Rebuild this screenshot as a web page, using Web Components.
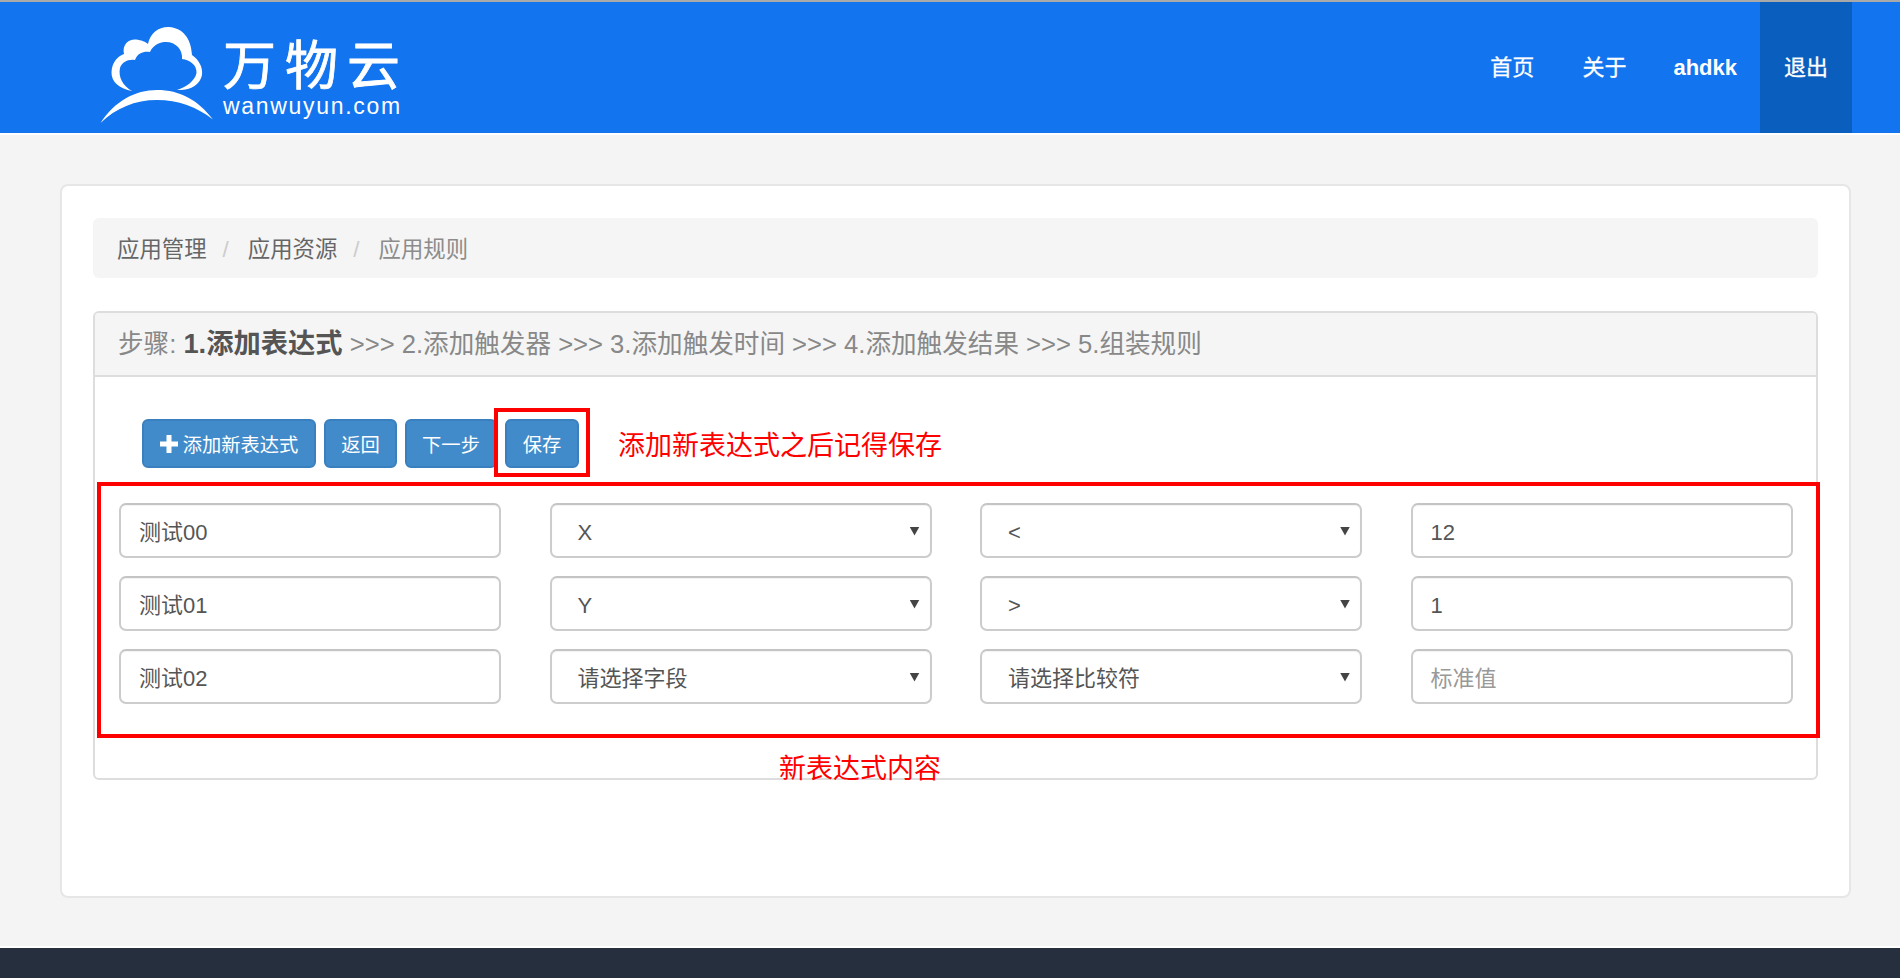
<!DOCTYPE html>
<html lang="zh">
<head>
<meta charset="utf-8">
<title>应用规则</title>
<style>
  html, body { margin: 0; height: 978px; overflow: hidden; }
  body {
    background: #f4f4f4;
    font-family: "Liberation Sans", "Noto Sans CJK SC", sans-serif;
    color: #555;
  }
  step-panel b { font-size: 27.3px; color: #555; }
</style>
</head>
<body>
<app-navbar>
  <nav-item>首页</nav-item>
  <nav-item>关于</nav-item>
  <nav-item bold>ahdkk</nav-item>
  <nav-item active>退出</nav-item>
</app-navbar>

<app-card>
  <bread-crumbs>
    <crumb-item>应用管理</crumb-item>
    <crumb-item>应用资源</crumb-item>
    <crumb-item current>应用规则</crumb-item>
  </bread-crumbs>

  <step-panel>
    <span slot="heading">步骤: <b>1.添加表达式</b> &gt;&gt;&gt; 2.添加触发器 &gt;&gt;&gt; 3.添加触发时间 &gt;&gt;&gt; 4.添加触发结果 &gt;&gt;&gt; 5.组装规则</span>

    <tool-bar>
      <ui-button icon="plus" style="width:174px">添加新表达式</ui-button>
      <ui-button style="width:73px">返回</ui-button>
      <ui-button style="width:92px">下一步</ui-button>
      <red-mark>
        <ui-button style="width:74px">保存</ui-button>
      </red-mark>
      <red-note style="margin-left:31px">添加新表达式之后记得保存</red-note>
    </tool-bar>

    <expr-rows>
      <form-field>测试00</form-field>
      <form-field select>X</form-field>
      <form-field select>&lt;</form-field>
      <form-field>12</form-field>

      <form-field>测试01</form-field>
      <form-field select>Y</form-field>
      <form-field select>&gt;</form-field>
      <form-field>1</form-field>

      <form-field>测试02</form-field>
      <form-field select>请选择字段</form-field>
      <form-field select>请选择比较符</form-field>
      <form-field placeholder>标准值</form-field>
    </expr-rows>

    <red-note style="margin:18px 0 0 684px; line-height:27px; height:27px">新表达式内容</red-note>
  </step-panel>
</app-card>

<app-footer></app-footer>

<script>
class AppNavbar extends HTMLElement {
  constructor() {
    super();
    const template = document.createElement('template');
    template.innerHTML = `
    <style>
      :host {
        display: block;
        border-top: 2px solid #a9a9a9;
        border-bottom: 2px solid #fff;
      }
      .bar {
        height: 131px;
        background: #1274ee;
        display: flex;
        justify-content: space-between;
        padding: 0 48px 0 100px;
      }
      .logo { display: flex; gap: 9px; color: #fff; }
      .cloud { display: block; width: 114px; height: 100px; margin-top: 22px; }
      .name {
        font-family: "Noto Sans CJK SC", sans-serif;
        font-size: 53px;
        line-height: 52px;
        letter-spacing: 9px;
        margin-top: 34px;
        white-space: nowrap;
        -webkit-text-stroke: 0.8px #fff;
      }
      .domain {
        font-family: "Liberation Sans", sans-serif;
        font-size: 23px;
        line-height: 24px;
        letter-spacing: 1.7px;
        margin-top: 6px;
      }
      nav { display: flex; }
    </style>
    <div class="bar">
      <div class="logo">
        <svg class="cloud" viewBox="100 22 114 100" fill="#fff">
          <path d="M132 89 C120 87 111 80 111.5 70 C112 60 118 54 124 52 C122 43 128 37 136 37.5 C141 38 146 40 148 42 C150 31 159 24.5 169 25 C182 26 191 35 192 53 C199 58 203 65 202 73 C200 83 190 89 177 88 C186 85 195 79 196.5 71 C197 63 190 58 182 57 C183 47 175 39 164 40 C157 41 152 45 150 50 C145 49 138 50 135 58 C128 57 122 60 120 66 C118 75 123 84 132 89 Z"/>
          <path d="M100.5 121 C115 99 135 88 157 88 C180 88 198 98 213 117.5 C197 105 178 98 157 98 C135 98 116 106 100.5 121 Z"/>
        </svg>
        <div>
          <div class="name">万物云</div>
          <div class="domain">wanwuyun.com</div>
        </div>
      </div>
      <nav><slot></slot></nav>
    </div>
    `;
    this.attachShadow({ mode: 'open' }).appendChild(template.content.cloneNode(true));
  }
}

class NavItem extends HTMLElement {
  constructor() {
    super();
    this.attachShadow({ mode: 'open' }).innerHTML = `
    <style>
      :host {
        display: flex;
        align-items: center;
        padding: 0 24px;
        color: #fff;
        font-size: 22px;
        line-height: 30px;
        white-space: nowrap;
        -webkit-text-stroke: 0.3px #fff;
      }
      :host([bold]) { font-weight: bold; -webkit-text-stroke: 0; padding: 0 23px; }
      :host([active]) { background: #0a5ebd; }
    </style>
    <slot></slot>
    `;
  }
}

class AppCard extends HTMLElement {
  constructor() {
    super();
    this.attachShadow({ mode: 'open' }).innerHTML = `
    <style>
      :host {
        display: block;
        box-sizing: border-box;
        width: 1791px;
        height: 714px;
        margin: 49px 0 0 60px;
        padding: 32px 31px;
        background: #fff;
        border: 2px solid #e6e6e6;
        border-radius: 8px;
      }
    </style>
    <slot></slot>
    `;
  }
}

class BreadCrumbs extends HTMLElement {
  constructor() {
    super();
    this.attachShadow({ mode: 'open' }).innerHTML = `
    <style>
      :host {
        display: flex;
        align-items: center;
        height: 60px;
        padding: 3px 0 0 24px;
        box-sizing: border-box;
        background: #f5f5f5;
        border-radius: 6px;
        line-height: 30px;
      }
    </style>
    <slot></slot>
    `;
  }
}

class CrumbItem extends HTMLElement {
  constructor() {
    super();
    this.attachShadow({ mode: 'open' }).innerHTML = `
    <style>
      :host {
        display: inline-block;
        font-size: 22.4px;
        color: #666;
        white-space: nowrap;
      }
      :host([current]) { color: #8c8c8c; }
      .sep { color: #ccc; padding: 0 19px 0 16px; }
      :host([current]) .sep { display: none; }
    </style>
    <slot></slot><span class="sep">/</span>
    `;
  }
}

class StepPanel extends HTMLElement {
  constructor() {
    super();
    this.attachShadow({ mode: 'open' }).innerHTML = `
    <style>
      :host {
        display: block;
        box-sizing: border-box;
        height: 469px;
        margin-top: 33px;
        background: #fff;
        border: 2px solid #ddd;
        border-radius: 6px;
      }
      header {
        box-sizing: border-box;
        height: 64px;
        padding: 0 0 1px 23px;
        display: flex;
        align-items: center;
        background: #f5f5f5;
        border-bottom: 2px solid #ddd;
        border-radius: 4px 4px 0 0;
        color: #888;
        font-size: 25.6px;
        line-height: 34px;
        white-space: nowrap;
      }
      ::slotted(span) { color: #888; }
    </style>
    <header><slot name="heading"></slot></header>
    <slot></slot>
    `;
  }
}

class ToolBar extends HTMLElement {
  constructor() {
    super();
    this.attachShadow({ mode: 'open' }).innerHTML = `
    <style>
      :host {
        display: flex;
        align-items: center;
        gap: 8px;
        height: 49px;
        margin-top: 42px;
        padding-left: 47px;
      }
    </style>
    <slot></slot>
    `;
  }
}

class UiButton extends HTMLElement {
  constructor() {
    super();
    const plus = this.getAttribute('icon') === 'plus'
      ? '<svg viewBox="0 0 18 18" width="18" height="18"><path fill="#fff" d="M6.5 0h5v6.5H18v5h-6.5V18h-5v-6.5H0v-5h6.5z"/></svg>'
      : '';
    this.attachShadow({ mode: 'open' }).innerHTML = `
    <style>
      :host {
        display: inline-flex;
        flex: none;
        align-items: center;
        justify-content: center;
        gap: 5px;
        box-sizing: border-box;
        height: 49px;
        background: #428bca;
        border: 2px solid #3a80bf;
        border-radius: 6px;
        color: #fff;
        font-size: 19.3px;
        white-space: nowrap;
      }
      svg { display: block; }
    </style>
    ${plus}<slot></slot>
    `;
  }
}

class RedMark extends HTMLElement {
  constructor() {
    super();
    this.attachShadow({ mode: 'open' }).innerHTML = `
    <style>
      :host {
        display: block;
        flex: none;
        position: relative;
        margin: -11px -11px -9px -11px;
        padding: 7px 7px 5px 7px;
        background: #fff;
        border: 4px solid #f00;
      }
      ::slotted(*) { vertical-align: top; }
    </style>
    <slot></slot>
    `;
  }
}

class RedNote extends HTMLElement {
  constructor() {
    super();
    this.attachShadow({ mode: 'open' }).innerHTML = `
    <style>
      :host {
        display: block;
        flex: none;
        color: #f00;
        font-size: 27px;
        white-space: nowrap;
      }
    </style>
    <slot></slot>
    `;
  }
}

class ExprRows extends HTMLElement {
  constructor() {
    super();
    this.attachShadow({ mode: 'open' }).innerHTML = `
    <style>
      :host {
        display: grid;
        grid-template-columns: repeat(4, 382px);
        grid-auto-rows: 55px;
        column-gap: 48.5px;
        row-gap: 18px;
        margin: 14px -4px 0 2px;
        padding: 17px 0 30px 18px;
        border: 4px solid #f00;
      }
    </style>
    <slot></slot>
    `;
  }
}

class FormField extends HTMLElement {
  constructor() {
    super();
    this.attachShadow({ mode: 'open' }).innerHTML = `
    <style>
      :host {
        display: flex;
        align-items: center;
        justify-content: space-between;
        box-sizing: border-box;
        padding: 4px 10px 0 18px;
        background: #fff;
        border: 2px solid #ccc;
        border-top-color: #c4c4c4;
        border-radius: 7px;
        box-shadow: inset 0 1px 1px rgba(0, 0, 0, 0.05);
        color: #555;
        font-size: 22px;
        line-height: 30px;
        white-space: nowrap;
      }
      :host([select]) { padding-left: 26px; }
      :host([placeholder]) { color: #999; }
      .arrow {
        display: none;
        width: 10px;
        height: 9px;
        margin-top: -3px;
        background: #444;
        clip-path: polygon(0 0, 100% 0, 50% 100%);
      }
      :host([select]) .arrow { display: block; }
    </style>
    <span><slot></slot></span><i class="arrow"></i>
    `;
  }
}

class AppFooter extends HTMLElement {
  constructor() {
    super();
    this.attachShadow({ mode: 'open' }).innerHTML = `
    <style>
      :host {
        display: block;
        height: 30px;
        margin-top: 48px;
        background: #262f3e;
        border-top: 2px solid #fff;
      }
    </style>
    `;
  }
}

customElements.define('app-navbar', AppNavbar);
customElements.define('nav-item', NavItem);
customElements.define('app-card', AppCard);
customElements.define('bread-crumbs', BreadCrumbs);
customElements.define('crumb-item', CrumbItem);
customElements.define('step-panel', StepPanel);
customElements.define('tool-bar', ToolBar);
customElements.define('ui-button', UiButton);
customElements.define('red-mark', RedMark);
customElements.define('red-note', RedNote);
customElements.define('expr-rows', ExprRows);
customElements.define('form-field', FormField);
customElements.define('app-footer', AppFooter);
</script>
</body>
</html>
